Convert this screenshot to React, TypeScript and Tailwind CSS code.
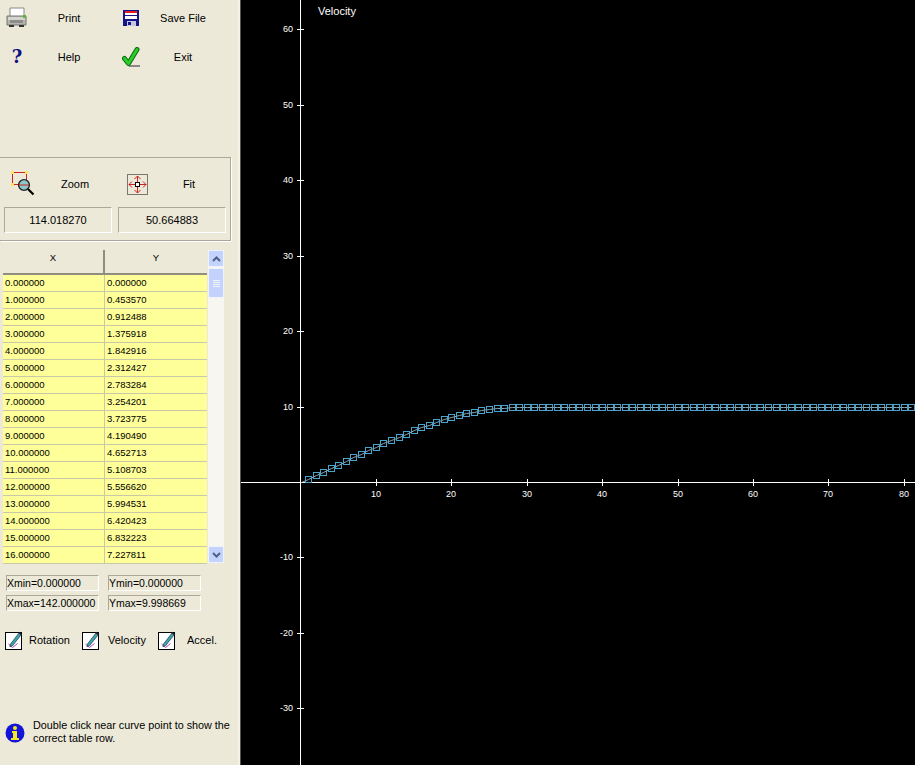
// Velocity curve viewer: left tool panel with data table, black plot on the right.

const FONT = { fontFamily: '"Liberation Sans", Arial, sans-serif' };

const tableRows = [
  ['0.000000', '0.000000'],
  ['1.000000', '0.453570'],
  ['2.000000', '0.912488'],
  ['3.000000', '1.375918'],
  ['4.000000', '1.842916'],
  ['5.000000', '2.312427'],
  ['6.000000', '2.783284'],
  ['7.000000', '3.254201'],
  ['8.000000', '3.723775'],
  ['9.000000', '4.190490'],
  ['10.000000', '4.652713'],
  ['11.000000', '5.108703'],
  ['12.000000', '5.556620'],
  ['13.000000', '5.994531'],
  ['14.000000', '6.420423'],
  ['15.000000', '6.832223'],
  ['16.000000', '7.227811'],
];

const tail = [7.605, 7.96, 8.29, 8.59, 8.86, 9.1, 9.31, 9.49, 9.64, 9.77, 9.87, 9.94, 9.98, 10];

function PrinterIcon() {
  return (
    <svg width="22" height="22" viewBox="0 0 22 22">
      <path d="M5 1h14v9H5z" fill="#fff" stroke="#8a8a8a" transform="translate(-1 0)" />
      <path d="M1 9h19v9H1z" fill="#b4b4b0" stroke="#77776f" />
      <path d="M2 10h17v3H2z" fill="#d4d4d0" />
      <path d="M17 8h3v3h-3z" fill="#5fb53c" />
      <path d="M4 13h13v3H4z" fill="#8c8c88" />
      <path d="M3 18h5v2H3zM13 18h5v2h-5z" fill="#333" />
    </svg>
  );
}

function FloppyIcon() {
  return (
    <svg width="16" height="16" viewBox="0 0 16 16" shapeRendering="crispEdges">
      <path d="M0 0h16v16H0z" fill="#14148c" />
      <path d="M2 1h12v2H2z" fill="#e81c1c" />
      <path d="M2 3h12v6H2z" fill="#fff" />
      <path d="M2 5h12v1H2z" fill="#14148c" />
      <path d="M4 11h9v5H4z" fill="#c8c8d8" />
      <path d="M5 12h3v3H5z" fill="#14148c" />
    </svg>
  );
}

function CheckIcon() {
  return (
    <svg width="19" height="20" viewBox="0 0 19 20">
      <path d="M7 18h11v2H7z" fill="#8a8a84" />
      <path d="M2.5 11.5L6.5 16.5L15 2.5" fill="none" stroke="#0c6a0c" strokeWidth="5" strokeLinejoin="round" strokeLinecap="round" />
      <path d="M2.5 11.5L6.5 16.5L15 2.5" fill="none" stroke="#2ccb2c" strokeWidth="3" strokeLinejoin="round" strokeLinecap="round" />
    </svg>
  );
}

function ZoomIcon() {
  return (
    <svg width="24" height="26" viewBox="0 0 24 26">
      <path d="M1.5 1.5h14v12h-14z" fill="none" stroke="#d02020" />
      <path d="M0 0h3v3H0zM14 0h3v3h-3zM0 12h3v3H0z" fill="#f8e860" />
      <circle cx="13" cy="14" r="5.4" fill="#8fc8c8" stroke="#222" strokeWidth="1.4" />
      <path d="M8 14h10" stroke="#d02020" />
      <path d="M17 18l5.5 5.5" stroke="#000" strokeWidth="2.2" />
    </svg>
  );
}

function FitIcon() {
  return (
    <svg width="21" height="21" viewBox="0 0 21 21" shapeRendering="crispEdges">
      <path d="M.5.5h20v20H.5z" fill="#ece9d8" stroke="#77776f" />
      <path d="M10.5 2v17M2 10.5h17" stroke="#d02020" />
      <path d="M10.5 2l-3 3M10.5 2l3 3M10.5 19l-3-3M10.5 19l3-3M2 10.5l3-3M2 10.5l3 3M19 10.5l-3-3M19 10.5l-3 3" stroke="#d02020" shapeRendering="auto" />
      <path d="M8.5 8.5h4v4h-4z" fill="#fff" stroke="#000" />
    </svg>
  );
}

function PenCheckIcon() {
  return (
    <svg width="18" height="19" viewBox="0 0 18 19" className="overflow-visible">
      <path d="M.5 1.5h16v17H.5z" fill="#fff" stroke="#000" shapeRendering="crispEdges" />
      <path d="M3.5 13l4 3.5 5-4" fill="none" stroke="#b040b0" />
      <path d="M5.5 13L14 2l2.2 1.7L7.5 14.8l-2.6.9z" fill="#3fa4b0" stroke="#1c3a44" strokeWidth=".7" />
      <path d="M14.2.8l3 2.2-1 1.2-3-2.2z" fill="#223" />
    </svg>
  );
}

function InfoIcon() {
  return (
    <svg width="20" height="20" viewBox="0 0 20 20">
      <circle cx="10" cy="10" r="9.5" fill="#1414d8" />
      <circle cx="10" cy="5" r="2" fill="#f4e820" />
      <path d="M7 8h5v7h2v2H6v-2h2v-5H7z" fill="#f4e820" />
    </svg>
  );
}

function ToolButton({ icon, label, iconWidth }: { icon: React.ReactNode; label: string; iconWidth: string }) {
  return (
    <div className="flex h-full w-[114px] items-center">
      <div className={`flex shrink-0 items-center justify-center ${iconWidth}`}>{icon}</div>
      <span className="flex-1 pr-[10px] text-center text-[11px] text-black">{label}</span>
    </div>
  );
}

function ScrollButton({ up }: { up?: boolean }) {
  return (
    <div className="flex h-[17px] w-[16px] items-center justify-center rounded-[2px] border border-[#eef3fe] bg-[#c3d3fd]">
      <svg width="9" height="6" viewBox="0 0 9 6">
        <path d={up ? 'M1 5l3.5-3.5L8 5' : 'M1 1l3.5 3.5L8 1'} fill="none" stroke="#4d6185" strokeWidth="2" />
      </svg>
    </div>
  );
}

function Scrollbar() {
  return (
    <div className="ml-px flex h-[313px] w-[16px] flex-col bg-[#f7f6f1]">
      <ScrollButton up />
      <div className="mt-px flex h-[30px] w-[16px] flex-col items-center justify-center gap-px rounded-[2px] border border-[#eef3fe] bg-[#c3d3fd]">
        <div className="h-px w-[7px] bg-[#eef3fe]" />
        <div className="h-px w-[7px] bg-[#eef3fe]" />
        <div className="h-px w-[7px] bg-[#eef3fe]" />
        <div className="h-px w-[7px] bg-[#eef3fe]" />
      </div>
      <div className="flex-1" />
      <ScrollButton />
    </div>
  );
}

function DataTable() {
  return (
    <div className="mt-[9px] ml-[3px] flex">
      <div className="w-[204px]">
        <div className="flex h-[25px] text-[9.5px] text-black">
          <div className="w-[102px] border-r-2 border-b-2 border-[#8f8d80] pt-[1px] text-center">X</div>
          <div className="w-[102px] border-b-2 border-[#8f8d80] pt-[1px] text-center">Y</div>
        </div>
        {tableRows.map(([x, y]) => (
          <div key={x} className="flex h-[17px] border-b border-[#c9c9a8] bg-[#ffff99] text-[9.5px] leading-[16px] text-black">
            <div className="w-[102px] border-r border-[#c9c9a8] pl-[2px]">{x}</div>
            <div className="w-[102px] pl-[2px]">{y}</div>
          </div>
        ))}
      </div>
      <Scrollbar />
    </div>
  );
}

function StatBox({ children }: { children: React.ReactNode }) {
  return (
    <div className="h-[16px] w-[93px] overflow-hidden border border-[#aca899] border-r-white border-b-white text-[10.5px] leading-[14px] whitespace-nowrap text-black">
      {children}
    </div>
  );
}

function CurveToggle({ label, labelClass }: { label: string; labelClass: string }) {
  return (
    <div className="flex items-center">
      <PenCheckIcon />
      <span className={`text-[11px] text-black ${labelClass}`}>{label}</span>
    </div>
  );
}

function SidePanel() {
  return (
    <div className="h-full w-[240px] shrink-0 border-r-2 border-r-[#f5f3e8] bg-[#ece9d8]">
      <div className="flex h-[36px]">
        <ToolButton icon={<PrinterIcon />} label="Print" iconWidth="w-[34px]" />
        <ToolButton icon={<FloppyIcon />} label="Save File" iconWidth="w-[34px]" />
      </div>
      <div className="mt-[3px] flex h-[36px]">
        <ToolButton
          icon={<span className="text-[18px] leading-none font-bold text-[#101080]" style={{ fontFamily: '"DejaVu Serif", serif' }}>?</span>}
          label="Help"
          iconWidth="w-[34px]"
        />
        <ToolButton icon={<CheckIcon />} label="Exit" iconWidth="w-[34px]" />
      </div>

      <div className="mt-[82px] h-[84px] w-[231px] border-t border-r border-b border-[#aca899] shadow-[1px_1px_0_#fff]">
        <div className="flex h-[49px] items-center pt-[3px]">
          <ToolButton icon={<ZoomIcon />} label="Zoom" iconWidth="w-[46px]" />
          <ToolButton icon={<FitIcon />} label="Fit" iconWidth="w-[46px]" />
        </div>
        <div className="flex gap-[6px] pl-[4px]">
          <div className="h-[26px] w-[108px] border border-[#aca899] border-r-white border-b-white text-center text-[11px] leading-[24px] text-black">114.018270</div>
          <div className="h-[26px] w-[108px] border border-[#aca899] border-r-white border-b-white text-center text-[11px] leading-[24px] text-black">50.664883</div>
        </div>
      </div>

      <DataTable />

      <div className="mt-[11px] ml-[6px] flex flex-col gap-[4px]">
        <div className="flex gap-[9px]">
          <StatBox>Xmin=0.000000</StatBox>
          <StatBox>Ymin=0.000000</StatBox>
        </div>
        <div className="flex gap-[9px]">
          <StatBox>Xmax=142.000000</StatBox>
          <StatBox>Ymax=9.998669</StatBox>
        </div>
      </div>

      <div className="mt-[20px] ml-[5px] flex">
        <CurveToggle label="Rotation" labelClass="w-[59px] pl-[6px]" />
        <CurveToggle label="Velocity" labelClass="w-[58px] pl-[8px]" />
        <CurveToggle label="Accel." labelClass="w-[52px] pl-[11px]" />
      </div>

      <div className="mt-[69px] ml-[5px] flex gap-[8px]">
        <div className="pt-[4px]"><InfoIcon /></div>
        <p className="w-[200px] text-[10.8px] leading-[13px] text-black">
          Double click near curve point to show the correct table row.
        </p>
      </div>
    </div>
  );
}

const X0 = 300.5;
const Y0 = 482;
const px = (v: number) => Math.round(X0 + v * 7.54);
const py = (v: number) => Math.round(Y0 - v * 7.545);

function Plot() {
  const values: number[] = [...tableRows.map((r) => parseFloat(r[1])), ...tail];
  while (values.length < 82) values.push(10);
  const points = values.map((v, i) => [px(i), py(v)] as const);
  const xTicks = [10, 20, 30, 40, 50, 60, 70, 80];
  const yTicks = [60, 50, 40, 30, 20, 10, -10, -20, -30];
  return (
    <div className="h-full flex-1 border-l border-[#55554f] bg-black">
      <svg width="674" height="765" viewBox="241 0 674 765" className="block" style={FONT}>
        <path d={`M241 ${Y0}.5H915M${Math.floor(X0)}.5 0V765`} stroke="#fff" fill="none" />
        {xTicks.map((t) => (
          <g key={t}>
            <path d={`M${px(t)}.5 479V486`} stroke="#fff" />
            <text x={px(t)} y={497} fill="#fff" fontSize="9" textAnchor="middle">{t}</text>
          </g>
        ))}
        {yTicks.map((t) => (
          <g key={t}>
            <path d={`M297 ${py(t)}.5H304`} stroke="#fff" />
            <text x={293} y={py(t) + 3} fill="#fff" fontSize="9" textAnchor="end">{t}</text>
          </g>
        ))}
        <text x={318} y={15} fill="#fff" fontSize="11">Velocity</text>
        <polyline points={points.map((p) => [p[0] + 0.5, p[1] + 0.5].join(',')).join(' ')} fill="none" stroke="#8fa9b5" />
        {points.slice(1).map(([x, y], i) => (
          <rect key={i} x={x - 2.5} y={y - 2.5} width="6" height="6" fill="none" stroke="#4ba3cc" shapeRendering="crispEdges" />
        ))}
      </svg>
    </div>
  );
}

export default function App() {
  return (
    <div className="flex h-[765px] w-[915px] overflow-hidden" style={FONT}>
      <SidePanel />
      <Plot />
    </div>
  );
}
